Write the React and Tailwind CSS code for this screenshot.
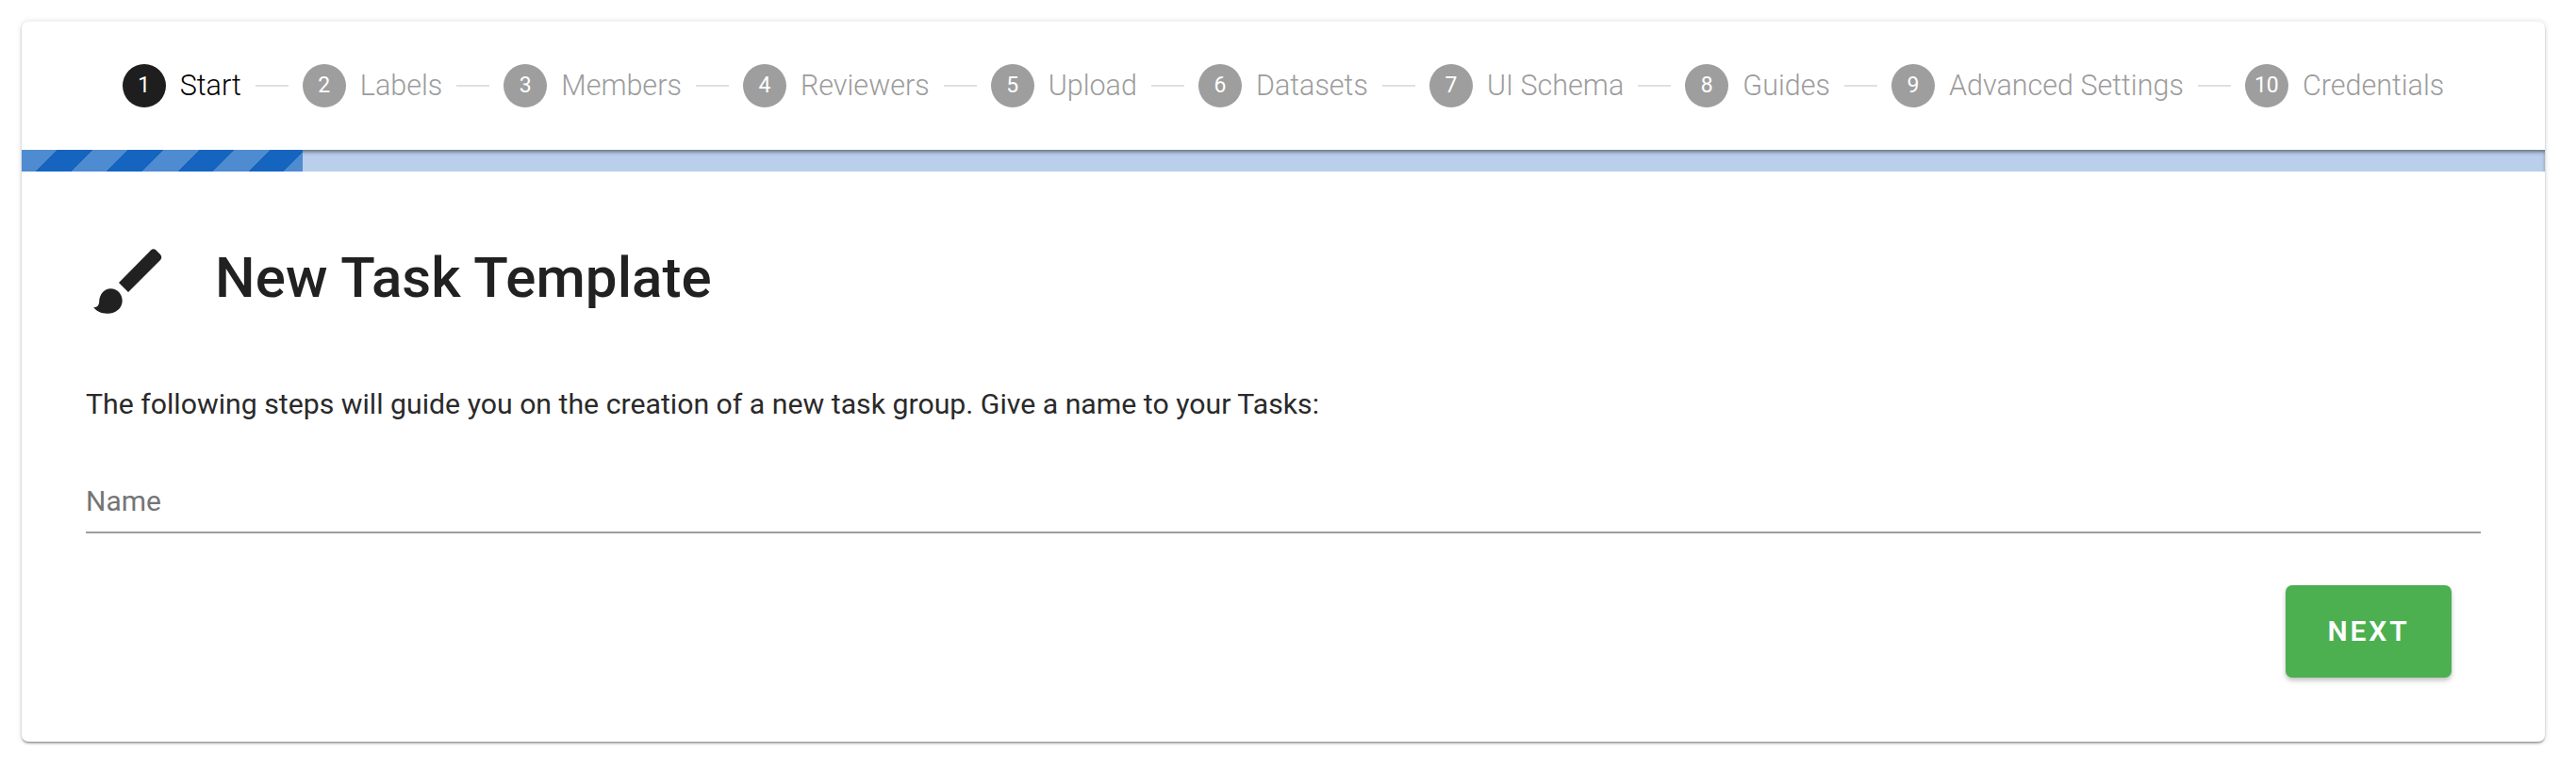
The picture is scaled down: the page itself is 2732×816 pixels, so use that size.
import React from 'react';

const steps = ['Start', 'Labels', 'Members', 'Reviewers', 'Upload', 'Datasets', 'UI Schema', 'Guides', 'Advanced Settings', 'Credentials'];

function Step({ index, label }) {
  const active = index === 0;
  return (
    <div className="flex items-center px-[15px]">
      <div className={`w-[46px] h-[46px] rounded-full flex items-center justify-center text-white text-[23px] ${active ? 'bg-[#1e1e1e]' : 'bg-[#9e9e9e]'}`}>
        {index + 1}
      </div>
      <span className={`ml-[15px] text-[30.5px] leading-[46px] font-light whitespace-nowrap ${active ? 'text-black' : 'text-[#9c9c9c]'}`}>
        {label}
      </span>
    </div>
  );
}

function BrushIcon() {
  return (
    <svg width="76" height="76" viewBox="0 0 76 76" className="fill-[#212121] shrink-0">
      <path d="M29 40 L63 5.5 Q65.7 3 68.5 5.5 L73 10 Q75.5 13 73 16 L39 50 Z" />
      <path d="M2.3 66 C5 66.5 8 65 8.2 60 C8.5 52 14 46.3 20.3 46.3 C27.5 46.3 32.7 52 32.7 59.3 C32.7 67 26 72.7 17 72.7 C10 72.7 5 70 2.3 66 Z" />
    </svg>
  );
}

export default function App() {
  return (
    <div className="w-[2732px] h-[816px] bg-white p-[23px] font-['Roboto',sans-serif] text-[#212121]">
      <div className="h-[764px] w-[2676px] bg-white rounded-[7px] overflow-hidden shadow-[0_2px_3px_-1px_rgba(0,0,0,0.55),0_0_6px_rgba(0,0,0,0.14)]">
        <div className="h-[136px] flex items-center justify-center">
          {steps.map((label, i) => (
            <React.Fragment key={label}>
              {i > 0 && <div className="w-[35px] h-[2px] bg-[#e0e0e0]" />}
              <Step index={i} label={label} />
            </React.Fragment>
          ))}
        </div>

        <div className="h-[23px] bg-[#b9cfeb] shadow-[inset_0_3px_4px_-1px_rgba(0,0,0,0.5)]">
          <div className="h-full w-[298px] bg-[repeating-linear-gradient(135deg,#4f8bd0_0,#4f8bd0_26.6px,#1565c0_26.6px,#1565c0_53.2px)]" />
        </div>

        <div className="px-[68px]">
          <div className="flex items-center pt-[78px] pl-[6px]">
            <BrushIcon />
            <h1 className="ml-[55px] -mt-[6px] text-[60px] leading-[76px] font-medium tracking-[0.1px]">New Task Template</h1>
          </div>
          <p className="mt-[71px] text-[30.24px] leading-[44px] text-[#2a2a2a]">
            The following steps will guide you on the creation of a new task group. Give a name to your Tasks:
          </p>
          <div className="mt-[47px] h-[68px] border-b-[2px] border-[#9e9e9e] flex items-center text-[30px] text-[#757575]">
            Name
          </div>
          <div className="flex justify-end pr-[31px] pt-[55px]">
            <button className="w-[176px] h-[98px] pb-[2px] rounded-[7px] bg-[#4caf50] text-white text-[30px] font-semibold tracking-[2.9px] shadow-[0_3px_5px_rgba(0,0,0,0.25)]">
              NEXT
            </button>
          </div>
        </div>
      </div>
    </div>
  );
}
